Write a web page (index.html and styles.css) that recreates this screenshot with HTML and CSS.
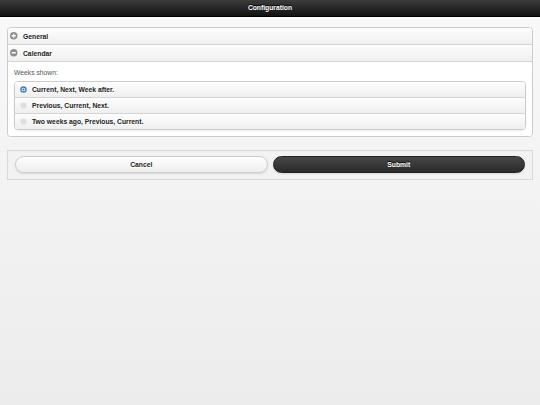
FILE: index.html
```html
<!DOCTYPE html>
<html>
<head>
<meta charset="utf-8">
<title>Configuration</title>
<link rel="stylesheet" href="styles.css">
</head>
<body>
<div class="header"><h1 class="title">Configuration</h1></div>
<div class="content">
  <div class="coll-set">
    <div class="coll-head">
      <svg class="ic" viewBox="0 0 8 8"><circle cx="4" cy="4" r="4" fill="#8f8f8f"/><path d="M4 1.8V6.2M1.8 4H6.2" stroke="#fff" stroke-width="1.4"/></svg>
      <span>General</span>
    </div>
    <div class="coll-head">
      <svg class="ic" viewBox="0 0 8 8"><circle cx="4" cy="4" r="4" fill="#8f8f8f"/><path d="M1.8 4H6.2" stroke="#fff" stroke-width="1.4"/></svg>
      <span>Calendar</span>
    </div>
    <div class="coll-body">
      <div class="label">Weeks shown:</div>
      <div class="radio-group">
        <div class="radio">
          <svg class="ri" viewBox="0 0 8 8"><circle cx="4" cy="4" r="3.7" fill="#3b7fc4"/><circle cx="4" cy="4" r="2.1" fill="#fff"/><circle cx="4" cy="4" r="1.2" fill="#2d6aa8"/></svg>
          <span>Current, Next, Week after.</span>
        </div>
        <div class="radio">
          <svg class="ri" viewBox="0 0 8 8"><circle cx="4" cy="4" r="3.5" fill="#dedede"/></svg>
          <span>Previous, Current, Next.</span>
        </div>
        <div class="radio">
          <svg class="ri" viewBox="0 0 8 8"><circle cx="4" cy="4" r="3.5" fill="#dedede"/></svg>
          <span>Two weeks ago, Previous, Current.</span>
        </div>
      </div>
    </div>
  </div>
  <div class="bar">
    <div class="btn btn-c">Cancel</div>
    <div class="btn btn-a">Submit</div>
  </div>
</div>
</body>
</html>
```

FILE: styles.css
```css
html {
  height: 100%;
  background: linear-gradient(#f9f9f9, #ececec);
}
body {
  margin: 0;
  min-height: 100%;
  font-family: "Liberation Sans", Helvetica, Arial, sans-serif;
  font-size: 6.75px;
  color: #333;
}
.header {
  height: 17px;
  background: linear-gradient(#3c3c3c, #111);
  border-bottom: 1px solid #000;
  box-sizing: border-box;
}
.title {
  margin: 0;
  text-align: center;
  font-size: 6.75px;
  line-height: 16px;
  font-weight: bold;
  color: #fff;
  text-shadow: 0 -1px 0 #000;
}
.content {
  padding: 10px 7px 0;
}
.coll-set {
  border: 1px solid #ccc;
  border-radius: 4px;
  overflow: hidden;
  background: #fff;
}
.coll-head {
  height: 16px;
  display: flex;
  align-items: center;
  background: linear-gradient(#fdfdfd, #f0f0f0);
  border-bottom: 1px solid #d4d4d4;
  font-weight: bold;
  color: #222;
  text-shadow: 0 1px 0 #fff;
}
.ic {
  width: 7.5px;
  height: 7.5px;
  margin-left: 2px;
  margin-right: 5.5px;
  flex: none;
}
.coll-body {
  padding: 6px 6px 6px;
  background: #fff;
}
.label {
  line-height: 9px;
  color: #555;
  margin-bottom: 4px;
}
.radio-group {
  border: 1px solid #ccc;
  border-radius: 4px;
  overflow: hidden;
  box-shadow: 0 1px 2px rgba(0,0,0,.08);
}
.radio {
  height: 15px;
  display: flex;
  align-items: center;
  background: linear-gradient(#fdfdfd, #efefef);
  font-weight: bold;
  color: #222;
  text-shadow: 0 1px 0 #fff;
}
.radio + .radio {
  border-top: 1px solid #d4d4d4;
}
.ri {
  width: 7px;
  height: 7px;
  margin-left: 4.5px;
  margin-right: 5.5px;
  flex: none;
}
.bar {
  margin-top: 13px;
  border: 1px solid #d8d8d8;
  background: #f2f2f2;
  padding: 5px 7px 6px;
  display: grid;
  grid-template-columns: 1fr 1fr;
  gap: 5px;
}
.btn {
  height: 17px;
  box-sizing: border-box;
  border-radius: 9px;
  display: flex;
  align-items: center;
  justify-content: center;
  font-weight: bold;
  box-shadow: 0 1px 2px rgba(0,0,0,.12);
}
.btn-c {
  border: 1px solid #ccc;
  background: linear-gradient(#fefefe, #eee);
  color: #222;
  text-shadow: 0 1px 0 #fff;
}
.btn-a {
  border: 1px solid #222;
  background: linear-gradient(#464646, #2a2a2a);
  color: #fff;
  text-shadow: 0 -1px 0 #000;
}
```
